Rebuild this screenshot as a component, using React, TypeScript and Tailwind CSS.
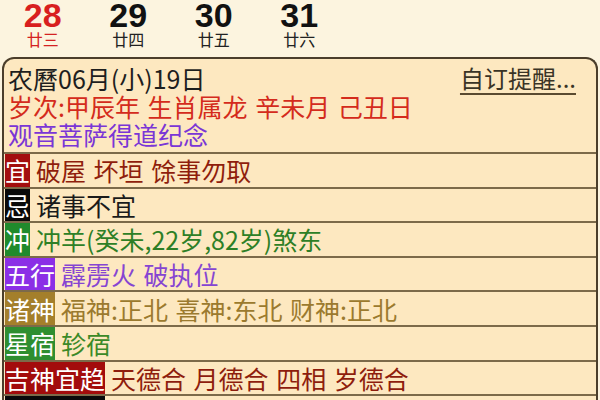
const days = [
  { num: '28', lunar: '廿三', red: true },
  { num: '29', lunar: '廿四', red: false },
  { num: '30', lunar: '廿五', red: false },
  { num: '31', lunar: '廿六', red: false },
]

const rows = [
  { label: '宜', labelBg: 'bg-[#a30e0e]', text: '破屋 坏垣 馀事勿取', color: 'text-[#8f1e0c]' },
  { label: '忌', labelBg: 'bg-[#0a0a0a]', text: '诸事不宜', color: 'text-[#1a1a1a]' },
  { label: '冲', labelBg: 'bg-[#208a2c]', text: '冲羊(癸未,22岁,82岁)煞东', color: 'text-[#2e7f26]' },
  { label: '五行', labelBg: 'bg-[#8b2fe6]', text: '霹雳火 破执位', color: 'text-[#8645d2]' },
  { label: '诸神', labelBg: 'bg-[#a47f2b]', text: '福神:正北 喜神:东北 财神:正北', color: 'text-[#9b7a2e]' },
  { label: '星宿', labelBg: 'bg-[#2e8e30]', text: '轸宿', color: 'text-[#3c8a28]' },
  { label: '吉神宜趋', labelBg: 'bg-[#a30c0c]', text: '天德合 月德合 四相 岁德合', color: 'text-[#8e1d0d]' },
  { label: '凶神宜忌', labelBg: 'bg-[#0a0a0a]', text: '月破 大耗 四击 九空', color: 'text-[#1a1a1a]' },
]

export default function App() {
  return (
    <div
      className="w-[600px] h-[400px] overflow-hidden bg-[#fcf4df]"
      style={{ fontFamily: '"Noto Sans CJK SC", "Noto Sans", sans-serif' }}
    >
      {/* week strip */}
      <div className="grid grid-cols-[repeat(7,85.5px)] h-[57px]">
        {days.map((d) => (
          <div key={d.num} className="flex flex-col items-center">
            <div
              className={`text-[34px] font-bold leading-[30px] ${d.red ? 'text-[#d81f1f]' : 'text-[#111]'}`}
              style={{ fontFamily: '"Liberation Sans", Arial, sans-serif' }}
            >
              {d.num}
            </div>
            <div className={`text-[16px] leading-[18px] ${d.red ? 'text-[#d42222]' : 'text-[#222]'}`}>
              {d.lunar}
            </div>
          </div>
        ))}
      </div>

      {/* almanac box */}
      <div className="mx-[2px] border-2 border-b-0 border-[#4b3e2b] rounded-t-[12px] bg-[#fde8c0]">
        <div className="pt-[5px] pb-[4px] pl-[4px] pr-[20px] text-[25px] leading-[28px] [word-spacing:2px]">
          <div className="flex justify-between">
            <span className="text-[#1e1e1e]">农曆06月(小)19日</span>
            <span className="text-[24px] text-[#3a3426] underline decoration-2 underline-offset-[5px] decoration-[#5a4a30]">
              自订提醒...
            </span>
          </div>
          <div className="text-[#d42b1c]">岁次:甲辰年 生肖属龙 辛未月 己丑日</div>
          <div className="text-[#7a36d6]">观音菩萨得道纪念</div>
        </div>

        {rows.map((r) => (
          <div key={r.label} className="flex items-stretch border-t-2 border-[#7c6a49] h-[34.6px]">
            <div className={`${r.labelBg} ml-[1px] text-white text-[25px] leading-[32px] flex items-center`}>
              {r.label}
            </div>
            <div
              className={`${r.color} pl-[6px] text-[25px] leading-[32px] flex items-center whitespace-nowrap [word-spacing:2px]`}
            >
              {r.text}
            </div>
          </div>
        ))}
      </div>
    </div>
  )
}
